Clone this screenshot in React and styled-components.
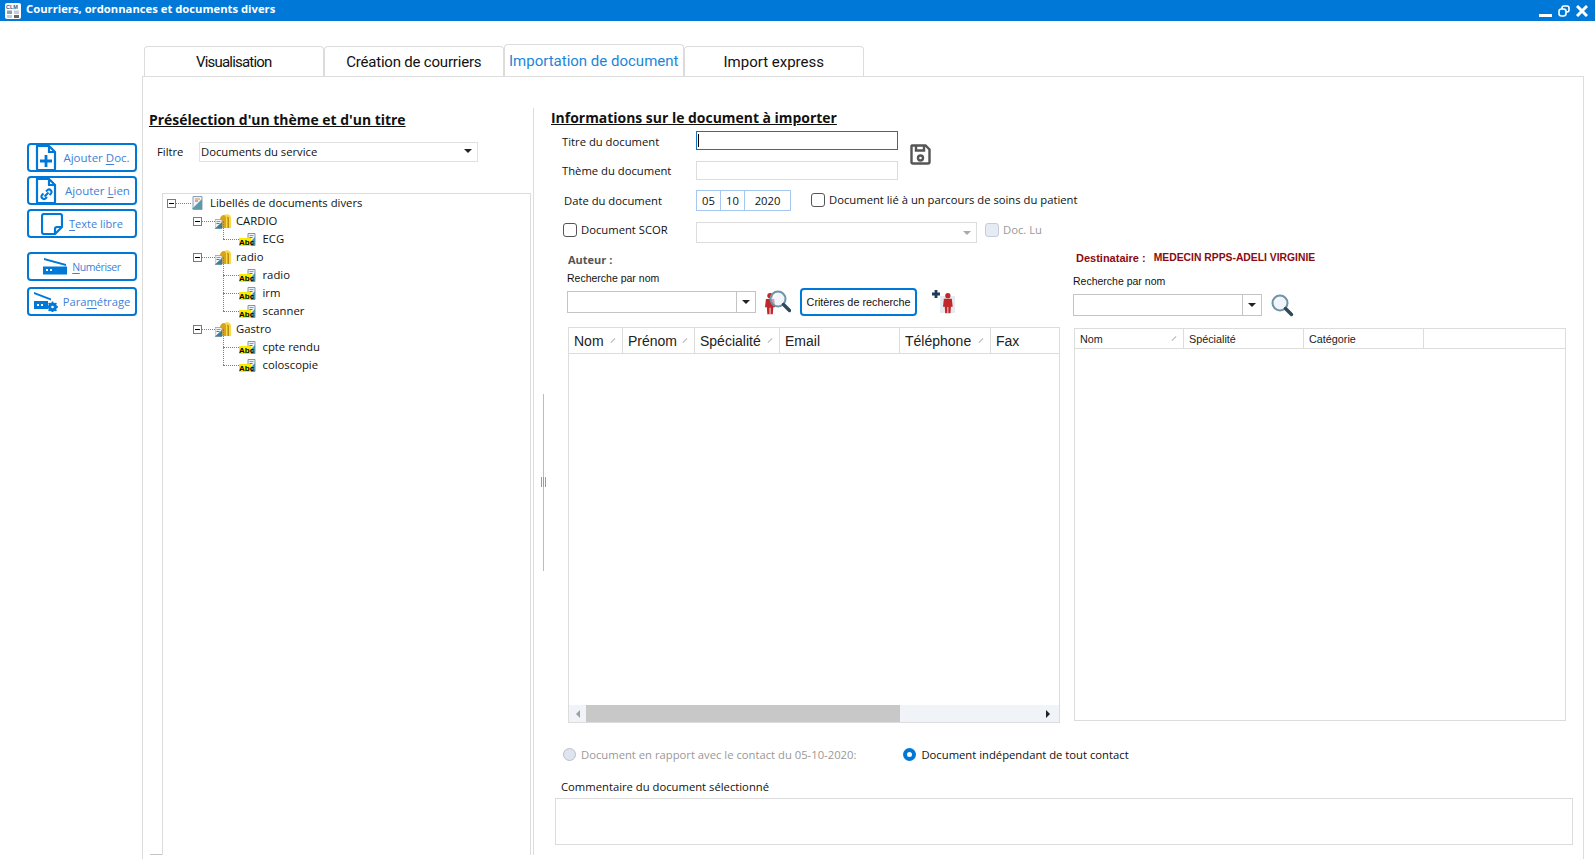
import React from 'react'
import styled, { createGlobalStyle } from 'styled-components'

const BLUE = '#0078d7'
const LINE = '#dcdcdc'

const Global = createGlobalStyle`
  html, body { margin: 0; padding: 0; background: #fff; }
  body { font-family: "Open Sans", "Liberation Sans", sans-serif; color: #111; overflow: hidden; }
`

const Screen = styled.div`
  width: 1595px;
  height: 859px;
  display: flex;
  flex-direction: column;
  overflow: hidden;
`

const TitleBar = styled.div`
  height: 21px;
  flex: none;
  background: ${BLUE};
  display: flex;
  align-items: center;
  padding: 0 5px;
  color: #fff;
`

const AppIcon = styled.svg`
  width: 16px;
  height: 16px;
  margin-right: 5px;
`

const WindowTitle = styled.span`
  font-size: 11.25px;
  font-weight: 700;
  flex: 1;
  padding-bottom: 4px;
`

const WindowButtons = styled.div`
  display: flex;
  align-items: center;
  gap: 6px;
  margin-right: 2px;
`

const Body = styled.div`
  flex: 1;
  display: flex;
  min-height: 0;
`

const Sidebar = styled.div`
  width: 142px;
  flex: none;
  box-sizing: border-box;
  padding: 122px 0 0 27px;
  display: flex;
  flex-direction: column;
`

const SideButton = styled.button`
  width: 110px;
  height: 29px;
  margin-bottom: ${(p) => p.$mb || 4}px;
  box-sizing: border-box;
  border: 2px solid ${BLUE};
  border-radius: 4px;
  background: #fff;
  display: flex;
  align-items: center;
  justify-content: center;
  gap: ${(p) => p.$gap || 6}px;
  padding: 0 0 0 ${(p) => p.$pl || 0}px;
  color: #3d7fd9;
  font-family: "Open Sans", sans-serif;
  font-size: ${(p) => p.$fs || 11.5}px;
  letter-spacing: ${(p) => p.$ls || 0}px;
  u { text-decoration-thickness: 1px; text-underline-offset: 2px; }
`

const Main = styled.div`
  flex: 1;
  display: flex;
  flex-direction: column;
  padding: 25px 11px 0 0;
  min-width: 0;
`

const Tabs = styled.div`
  display: flex;
  gap: 0.5px;
  padding-left: 2px;
  height: 30px;
  flex: none;
`

const Tab = styled.div`
  width: 179.5px;
  box-sizing: border-box;
  border: 1px solid ${LINE};
  border-bottom: none;
  border-radius: 4px 4px 0 0;
  margin-top: ${(p) => (p.$active ? -2 : 0)}px;
  display: flex;
  align-items: center;
  justify-content: center;
  font-family: Roboto, sans-serif;
  font-size: 15px;
  letter-spacing: ${(p) => p.$tight || 0}px;
  color: ${(p) => (p.$active ? '#1a86d9' : '#111')};
`

const Panel = styled.div`
  flex: 1;
  display: flex;
  min-height: 0;
  box-sizing: border-box;
  border: 1px solid ${LINE};
  border-bottom: none;
`

const LeftPane = styled.div`
  width: 390px;
  flex: none;
  position: relative;
  box-sizing: border-box;
  display: flex;
  flex-direction: column;
  padding: 34px 0 4px 19px;
`

const Heading = styled.h2`
  margin: 0 0 0 ${(p) => p.$ml}px;
  font-size: 13.95px;
  line-height: 18px;
  font-weight: 700;
  text-decoration: underline;
  color: #111;
  white-space: nowrap;
`

const FilterRow = styled.div`
  display: flex;
  align-items: center;
  margin: 13px 0 0 -13px;
  height: 20px;
`

const Label = styled.span`
  font-size: 11.25px;
  white-space: nowrap;
  color: ${(p) => (p.$muted ? '#999' : '#111')};
`

const FilterLabel = styled(Label)`
  width: 42px;
  margin-left: 8px;
  padding-bottom: 2px;
`

const Select = styled.div`
  width: 279px;
  height: 20px;
  box-sizing: border-box;
  border: 1px solid #e2e2e2;
  display: flex;
  align-items: center;
  justify-content: space-between;
  font-size: 11.25px;
  padding: 0 5px 2px 1px;
`

const Arrow = styled.i`
  width: 0;
  height: 0;
  border-left: 4px solid transparent;
  border-right: 4px solid transparent;
  border-top: 4px solid ${(p) => p.$c || '#222'};
`

const TreeBox = styled.div`
  flex: 1;
  margin: 31px 2px 0 0;
  border: 1px solid ${LINE};
  border-bottom: none;
  position: relative;
  &::after {
    content: '';
    position: absolute;
    left: -13px;
    bottom: 0;
    width: 12px;
    height: 1px;
    background: #c4c4c4;
  }
`

const Group = styled.div`
  position: relative;
  &::before {
    content: '';
    position: absolute;
    left: ${(p) => p.$x}px;
    top: ${(p) => p.$top}px;
    bottom: ${(p) => p.$bottom}px;
    border-left: 1px dotted #808080;
  }
`

const Row = styled.div`
  height: 18px;
  display: flex;
  align-items: center;
  padding-left: ${(p) => p.$indent}px;
  position: relative;
`

const Expander = styled.span`
  width: 9px;
  height: 9px;
  box-sizing: border-box;
  border: 1px solid #7a7a7a;
  background: #fff;
  position: relative;
  flex: none;
  z-index: 1;
  &::after {
    content: '';
    position: absolute;
    left: 1px;
    right: 1px;
    top: 3px;
    height: 1px;
    background: #000;
  }
`

const Dash = styled.span`
  width: ${(p) => p.$w}px;
  flex: none;
  border-top: 1px dotted #808080;
`

const TreeText = styled.span`
  margin-left: ${(p) => p.$ml}px;
  padding-bottom: 2px;
  font-size: 11.3px;
  white-space: nowrap;
`

const Splitter = styled.div`
  width: 21px;
  flex: none;
  margin: 31px 0 4px;
  box-sizing: border-box;
  border-left: 1px solid ${LINE};
  display: flex;
  flex-direction: column;
  align-items: flex-start;
`

const SplitLine = styled.div`
  width: 1px;
  height: 177px;
  margin: 286px 0 0 9px;
  background: #bdbdbd;
`

const Grip = styled.div`
  width: 5px;
  height: 10px;
  margin: -94px 0 0 7px;
  background: repeating-linear-gradient(90deg, #9a9a9a 0 1px, #fff 1px 2px);
`

const RightPane = styled.div`
  flex: 1;
  min-width: 0;
  display: flex;
  flex-direction: column;
  padding: 32px 0 0 0;
`

const FormGrid = styled.div`
  display: grid;
  grid-template-columns: 142px 202px 1fr;
  grid-auto-rows: min-content;
  margin-top: 4px;
`

const FormLabel = styled(Label)`
  padding-left: ${(p) => p.$pl || 8}px;
  align-self: start;
  line-height: ${(p) => p.$lh || 19}px;
`

const Field = styled.div`
  height: ${(p) => p.$h}px;
  box-sizing: border-box;
  border: 1px solid ${(p) => (p.$focus ? '#1573c4' : LINE)};
  display: flex;
  align-items: center;
  justify-content: flex-end;
  padding-right: 6px;
  margin-bottom: ${(p) => p.$mb}px;
`

const Caret = styled.i`
  width: 1px;
  height: 13px;
  background: #000;
  margin: 0 auto 0 1px;
`

const SaveSlot = styled.div`
  grid-row: span 2;
  padding: 13px 0 0 12px;
`

const DateRow = styled.div`
  display: flex;
  align-items: center;
  grid-column: 2 / 4;
  height: 21px;
  margin-bottom: 11px;
`

const DatePart = styled.div`
  width: ${(p) => p.$w}px;
  height: 21px;
  box-sizing: border-box;
  border: 1px solid #a5c8f0;
  border-left-width: ${(p) => (p.$first ? 1 : 0)}px;
  display: flex;
  align-items: center;
  justify-content: center;
  font-size: 11.25px;
`

const Check = styled.span`
  width: 14px;
  height: 14px;
  box-sizing: border-box;
  border: 1px solid ${(p) => (p.$off ? '#c3ccda' : '#555')};
  background: ${(p) => (p.$off ? '#e6ebf3' : '#fff')};
  border-radius: 3px;
  flex: none;
`

const CheckRow = styled.div`
  display: flex;
  align-items: center;
  gap: 4px;
  margin-left: ${(p) => p.$ml || 0}px;
  transform: translateY(${(p) => p.$up || 0}px);
`

const ScorRow = styled(CheckRow)`
  height: 21px;
  padding-left: 9px;
  box-sizing: border-box;
`

const ScorExtras = styled.div`
  grid-column: 2 / 4;
  display: flex;
  align-items: center;
`

const ScorSelect = styled(Field)`
  width: 281px;
  margin-bottom: 0;
  padding-right: 5px;
`

const Columns = styled.div`
  flex: 1;
  min-height: 0;
  display: flex;
  gap: 13px;
  margin-top: 8px;
`

const Column = styled.div`
  display: flex;
  flex-direction: column;
  width: 493px;
  margin-left: ${(p) => p.$ml}px;
`

const AuthorTitle = styled.div`
  font-size: 11px;
  font-weight: 700;
  color: #555;
  margin-left: 1px;
  height: 18px;
  line-height: 18px;
`

const DestTitle = styled.div`
  display: flex;
  gap: 8px;
  font-size: 11px;
  font-weight: 700;
  color: #8a0b12;
  margin: -2px 0 0 3px;
  height: 18px;
  line-height: 18px;
  white-space: pre;
  font-family: "Liberation Sans", sans-serif;
`

const DestName = styled.span`
  font-size: 10.35px;
`

const SearchLabel = styled.div`
  font-family: "Liberation Sans", sans-serif;
  font-size: 10.5px;
  line-height: 14px;
  margin-top: ${(p) => p.$mt}px;
`

const SearchRow = styled.div`
  display: flex;
  align-items: center;
  height: 28px;
  margin-top: ${(p) => p.$mt}px;
`

const Combo = styled.div`
  width: 189px;
  height: 22px;
  box-sizing: border-box;
  border: 1px solid #c4c4c4;
  display: flex;
  justify-content: flex-end;
  flex: none;
  margin-right: ${(p) => p.$mr}px;
`

const ComboButton = styled.div`
  width: 18px;
  border-left: 1px solid #c4c4c4;
  display: flex;
  align-items: center;
  justify-content: center;
`

const Criteria = styled.button`
  width: 117px;
  height: 28px;
  box-sizing: border-box;
  border: 2px solid ${BLUE};
  border-radius: 4px;
  background: #fff;
  font-family: "Liberation Sans", sans-serif;
  font-size: 10.8px;
  padding: 0;
  margin: 0 15px 0 9px;
  color: #111;
  white-space: nowrap;
`

const GridBox = styled.div`
  height: ${(p) => p.$h}px;
  margin: ${(p) => p.$mt}px 0 0 ${(p) => p.$ml}px;
  box-sizing: border-box;
  border: 1px solid ${LINE};
  display: flex;
  flex-direction: column;
`

const GridHead = styled.div`
  display: flex;
  flex: none;
  height: ${(p) => p.$h}px;
  box-sizing: border-box;
  border-bottom: 1px solid ${LINE};
`

const HeadCell = styled.div`
  width: ${(p) => p.$w}px;
  flex: ${(p) => (p.$w ? 'none' : 1)};
  box-sizing: border-box;
  border-right: ${(p) => (p.$last ? 'none' : `1px solid ${LINE}`)};
  display: flex;
  align-items: center;
  justify-content: space-between;
  padding: 0 6px 0 5px;
  font-family: "Liberation Sans", sans-serif;
  font-size: ${(p) => p.$fs}px;
  color: #222;
`

const SortTick = styled.i`
  width: 6px;
  height: 1px;
  background: #b5b5b5;
  transform: rotate(-45deg);
  flex: none;
`

const GridFill = styled.div`
  flex: 1;
`

const ScrollBar = styled.div`
  height: 17px;
  flex: none;
  background: #f0f3f8;
  display: flex;
  align-items: center;
`

const ScrollThumb = styled.div`
  width: 314px;
  height: 100%;
  background: #c8c8c8;
  margin-left: 18px;
`

const ScrollArrow = styled.i`
  width: 0;
  height: 0;
  border-top: 4px solid transparent;
  border-bottom: 4px solid transparent;
  border-${(p) => (p.$left ? 'right' : 'left')}: 4px solid ${(p) => (p.$left ? '#a0a0a0' : '#222')};
  margin: ${(p) => (p.$left ? '0 -12px 0 7px' : '0 0 0 146px')};
`

const RadioRow = styled.div`
  display: flex;
  align-items: center;
  height: 20px;
  margin: 20px 0 0 9px;
`

const Radio = styled.span`
  width: 13px;
  height: 13px;
  box-sizing: border-box;
  border-radius: 50%;
  flex: none;
  margin-right: 5px;
  background: ${(p) => (p.$on ? '#fff' : '#dfe4ee')};
  border: ${(p) => (p.$on ? `4px solid ${BLUE}` : '1px solid #b8c0cc')};
`

const RadioGap = styled.span`
  width: 47px;
`

const CommentLabel = styled(Label)`
  margin: 15px 0 0 7px;
  line-height: 16px;
`

const CommentBox = styled.div`
  height: 47px;
  flex: none;
  margin: 3px 10px 14px 1px;
  box-sizing: border-box;
  border: 1px solid ${LINE};
`

const DocGlyph = ({ children }) => (
  <svg width="22" height="26" viewBox="0 0 22 26" fill="none" stroke={BLUE} strokeWidth="2.200">
    <path d="M2 1h12l6 6v17a1 1 0 0 1-1 1H3a1 1 0 0 1-1-1z" />
    <path d="M14 1v6h6" />
    {children}
  </svg>
)

const PlusDocIcon = () => (
  <DocGlyph>
    <path d="M11 10v12M5 16h12" strokeWidth="2.800" />
  </DocGlyph>
)

const LinkDocIcon = () => (
  <DocGlyph>
    <path d="M9.500 18.500l4-4" strokeWidth="2" />
    <path d="M8.500 15.500l-1.500 1.500a2.500 2.500 0 0 0 3.500 3.500l1.500-1.500" strokeWidth="2" />
    <path d="M11 13.500l1.500-1.500a2.500 2.500 0 0 1 3.500 3.500l-1.500 1.500" strokeWidth="2" />
  </DocGlyph>
)

const NoteIcon = () => (
  <svg width="22" height="22" viewBox="0 0 22 22" fill="none" stroke={BLUE} strokeWidth="2.200">
    <path d="M14 21H3a2 2 0 0 1-2-2V3a2 2 0 0 1 2-2h16a2 2 0 0 1 2 2v11z" />
    <path d="M14 21v-5a2 2 0 0 1 2-2h5" />
  </svg>
)

const ScannerIcon = () => (
  <svg width="24" height="17" viewBox="0 0 24 17">
    <path d="M1 0l22 6v2L1 2z" fill={BLUE} />
    <rect y="8.500" width="24" height="8" fill={BLUE} />
    <rect x="3" y="11" width="2" height="2" fill="#fff" />
    <rect x="7" y="11" width="2" height="2" fill="#fff" />
  </svg>
)

const ScannerGearIcon = () => (
  <svg width="24" height="20" viewBox="0 0 24 20">
    <path d="M0 0l17 6.500v2L0 2z" fill={BLUE} />
    <rect y="9" width="14" height="8" fill={BLUE} />
    <rect x="3" y="12" width="2" height="2" fill="#fff" />
    <rect x="7" y="12" width="2" height="2" fill="#fff" />
    <circle cx="18.500" cy="15" r="3.400" fill="none" stroke={BLUE} strokeWidth="2.200" />
    <path d="M18.500 9.500v11M13 15h11M14.600 11.100l7.800 7.800M22.400 11.100l-7.800 7.800" stroke={BLUE} strokeWidth="1.600" />
    <circle cx="18.500" cy="15" r="1.300" fill="#fff" />
  </svg>
)

const RootIcon = () => (
  <svg width="13" height="14" viewBox="0 0 13 14">
    <path d="M2 .5h9v13H2z" fill="#eef3f8" stroke="#8aa0b8" />
    <path d="M1 13L11 3v10z" fill="#5c9aa8" />
    <path d="M4 3h5" stroke="#e8892c" />
    <path d="M4 5h3" stroke="#d04a3a" />
  </svg>
)

const FolderIcon = () => (
  <svg width="16" height="15" viewBox="0 0 16 15">
    <path d="M5 5c0-2 2-4 4-4h3v13H5z" fill="#d9a41a" />
    <path d="M9 1c3-1.500 7-1 7 3v10h-5V4c0-1.500-1-2.500-2-3z" fill="#f7da45" />
    <path d="M12 3c1-.5 2 .5 2 1.500V14h-1.500V4.500z" fill="#b88c10" />
    <path d="M0 5.500h7v9H0z" fill="#eef3f8" stroke="#8aa0b8" strokeWidth=".8" />
    <path d="M0 14.500L7 8v6.500z" fill="#3e7f96" />
    <path d="M1.500 7.500h4" stroke="#e8892c" />
    <path d="M1.500 9.500h3" stroke="#d04a3a" />
  </svg>
)

const AbcIcon = () => (
  <svg width="17" height="13" viewBox="0 0 17 13">
    <path d="M9 .5h7v12H9z" fill="#eef3f8" stroke="#7f96ac" />
    <path d="M8 12.500L16 4v8.500z" fill="#4f93a3" />
    <path d="M10.500 2.500h4" stroke="#e8892c" />
    <path d="M10.500 4.500h3" stroke="#d04a3a" />
    <rect y="5" width="12" height="8" fill="#ffe800" />
    <text x="0" y="12" fontFamily="Liberation Sans" fontSize="8" fontWeight="700" fill="#000">Abc</text>
  </svg>
)

const SaveIcon = () => (
  <svg width="21" height="21" viewBox="0 0 21 21" fill="none" stroke="#555" strokeWidth="2.400">
    <path d="M2 1.500h13.500l4 4V18a1.500 1.500 0 0 1-1.500 1.500H3A1.500 1.500 0 0 1 1.500 18V2z" />
    <path d="M6 1.500v5h8v-5" />
    <circle cx="10.500" cy="14" r="2.500" />
  </svg>
)

const Lens = () => (
  <>
    <circle cx="11" cy="10" r="7.500" fill="#e4eff7" fillOpacity=".6" stroke="#6f94a8" strokeWidth="2" />
    <path d="M16.500 15.500l6 6" stroke="#2d4a5c" strokeWidth="3.400" strokeLinecap="round" />
    <path d="M6.500 8a5 5 0 0 1 4-3" stroke="#fff" strokeWidth="1.200" fill="none" />
  </>
)

const PersonShape = ({ x = 0, y = 0, s = 1 }) => (
  <g transform={`translate(${x} ${y}) scale(${s})`} fill="#c0262a">
    <circle cx="5.500" cy="3" r="3" />
    <path d="M1 6.500h9l1 9H9L8.500 23H6V16H5v7H2.500L2 15.500H0z" />
  </g>
)

const PersonSearchIcon = () => (
  <svg width="26" height="26" viewBox="0 0 26 26">
    <PersonShape x={0} y={4} s={0.92} />
    <g transform="translate(2 0)">
      <Lens />
    </g>
  </svg>
)

const PersonAddIcon = () => (
  <svg width="24" height="24" viewBox="0 0 24 24">
    <rect x="8" y="6" width="15" height="17" fill="#e6ebef" />
    <path d="M4 0v8M0 4h8" stroke="#1c3c5a" strokeWidth="2.800" />
    <PersonShape x={11} y={3} s={0.88} />
  </svg>
)

const SearchIcon = () => (
  <svg width="25" height="26" viewBox="0 0 25 26">
    <g transform="translate(0 1)">
      <Lens />
    </g>
  </svg>
)

const Leaf = ({ children }) => (
  <Row $indent={60}>
    <Dash $w={16} />
    <AbcIcon />
    <TreeText $ml={6.500}>{children}</TreeText>
  </Row>
)

const Branch = ({ name, items }) => (
  <>
    <Row $indent={30}>
      <Expander />
      <Dash $w={13} />
      <FolderIcon />
      <TreeText $ml={5}>{name}</TreeText>
    </Row>
    <Group $x={60} $top={-9} $bottom={9}>
      {items.map((item) => (
        <Leaf key={item}>{item}</Leaf>
      ))}
    </Group>
  </>
)

const authorCols = [
  { name: 'Nom', w: 54, tick: true },
  { name: 'Prénom', w: 72, tick: true },
  { name: 'Spécialité', w: 85, tick: true },
  { name: 'Email', w: 120 },
  { name: 'Téléphone', w: 91, tick: true },
  { name: 'Fax', last: true },
]

const destCols = [
  { name: 'Nom', w: 109, tick: true },
  { name: 'Spécialité', w: 120 },
  { name: 'Catégorie', w: 120 },
  { name: '', last: true },
]

const GridHeader = ({ cols, h, fs }) => (
  <GridHead $h={h}>
    {cols.map((c) => (
      <HeadCell key={c.name} $w={c.w} $last={c.last} $fs={fs}>
        {c.name}
        {c.tick && <SortTick />}
      </HeadCell>
    ))}
  </GridHead>
)

export default function App() {
  return (
    <Screen>
      <Global />
      <TitleBar>
        <AppIcon viewBox="0 0 16 16">
          <rect width="16" height="16" rx="2" fill="#fff" />
          <text x="1" y="6" fontSize="5.500" fontWeight="700" fontFamily="Liberation Sans" fill="#2a5f8f">CLM</text>
          <rect x="2" y="7.500" width="5" height="3.500" fill="#8aa0b8" />
          <rect x="9" y="7.500" width="5" height="3.500" fill="#c5ced8" />
          <rect x="2" y="12" width="5" height="3" fill="#c5ced8" />
          <rect x="9" y="12" width="5" height="3" fill="#666" />
        </AppIcon>
        <WindowTitle>Courriers, ordonnances et documents divers</WindowTitle>
        <WindowButtons>
          <svg width="13" height="12" viewBox="0 0 13 12"><rect y="9" width="13" height="3" fill="#fff" /></svg>
          <svg width="12" height="12" viewBox="0 0 12 12" fill="none" stroke="#fff" strokeWidth="1.600">
            <rect x="4" y="1" width="7" height="6" rx="2" />
            <rect x="1" y="4" width="7" height="7" rx="2.500" fill={BLUE} />
          </svg>
          <svg width="12" height="12" viewBox="0 0 12 12" stroke="#fff" strokeWidth="3"><path d="M1 1l10 10M11 1L1 11" /></svg>
        </WindowButtons>
      </TitleBar>
      <Body>
        <Sidebar>
          <SideButton $pl={1}>
            <PlusDocIcon />
            <span>Ajouter <u>D</u>oc.</span>
          </SideButton>
          <SideButton $gap={8} $pl={1}>
            <LinkDocIcon />
            <span>Ajouter <u>L</u>ien</span>
          </SideButton>
          <SideButton $mb={14} $gap={6} $fs={11}>
            <NoteIcon />
            <span><u>T</u>exte libre</span>
          </SideButton>
          <SideButton $mb={6} $gap={5} $fs={10.500} $ls={-0.4}>
            <ScannerIcon />
            <span><u>N</u>umériser</span>
          </SideButton>
          <SideButton $gap={5} $fs={11.200}>
            <ScannerGearIcon />
            <span>Para<u>m</u>étrage</span>
          </SideButton>
        </Sidebar>
        <Main>
          <Tabs>
            <Tab $tight={-0.8}>Visualisation</Tab>
            <Tab $tight={-0.2}>Création de courriers</Tab>
            <Tab $active>Importation de document</Tab>
            <Tab>Import express</Tab>
          </Tabs>
          <Panel>
            <LeftPane>
              <Heading $ml={-13}>Présélection d'un thème et d'un titre</Heading>
              <FilterRow>
                <FilterLabel>Filtre</FilterLabel>
                <Select>
                  Documents du service
                  <Arrow />
                </Select>
              </FilterRow>
              <TreeBox>
                <Group $x={35} $top={18} $bottom={535}>
                  <Row $indent={4}>
                    <Expander />
                    <Dash $w={15} />
                    <RootIcon />
                    <TreeText $ml={6}>Libellés de documents divers</TreeText>
                  </Row>
                  <Branch name="CARDIO" items={['ECG']} />
                  <Branch name="radio" items={['radio', 'irm', 'scanner']} />
                  <Branch name="Gastro" items={['cpte rendu', 'coloscopie']} />
                </Group>
              </TreeBox>
            </LeftPane>
            <Splitter>
              <SplitLine />
              <Grip />
            </Splitter>
            <RightPane>
              <Heading $ml={-3}>Informations sur le document à importer</Heading>
              <FormGrid>
                <FormLabel $lh={21}>Titre du document</FormLabel>
                <Field $h={19} $mb={11} $focus><Caret /></Field>
                <SaveSlot><SaveIcon /></SaveSlot>
                <FormLabel>Thème du document</FormLabel>
                <Field $h={19} $mb={10} />
                <FormLabel $pl={10} $lh={21}>Date du document</FormLabel>
                <DateRow>
                  <DatePart $first $w={25}>05</DatePart>
                  <DatePart $w={24}>10</DatePart>
                  <DatePart $w={46}>2020</DatePart>
                  <CheckRow $ml={20} $up={-1}>
                    <Check />
                    <Label>Document lié à un parcours de soins du patient</Label>
                  </CheckRow>
                </DateRow>
                <ScorRow $up={-3}>
                  <Check />
                  <Label>Document SCOR</Label>
                </ScorRow>
                <ScorExtras>
                  <ScorSelect $h={21}><Arrow $c="#aaa" /></ScorSelect>
                  <CheckRow $ml={8} $up={-3}>
                    <Check $off />
                    <Label $muted>Doc. Lu</Label>
                  </CheckRow>
                </ScorExtras>
              </FormGrid>
              <Columns>
                <Column $ml={13}>
                  <AuthorTitle>Auteur :</AuthorTitle>
                  <SearchLabel $mt={2}>Recherche par nom</SearchLabel>
                  <SearchRow $mt={3}>
                    <Combo $mr={9}><ComboButton><Arrow /></ComboButton></Combo>
                    <PersonSearchIcon />
                    <Criteria>Critères de recherche</Criteria>
                    <PersonAddIcon />
                  </SearchRow>
                  <GridBox $h={396} $mt={11} $ml={1}>
                    <GridHeader cols={authorCols} h={26} fs={14} />
                    <GridFill />
                    <ScrollBar>
                      <ScrollArrow $left />
                      <ScrollThumb />
                      <ScrollArrow />
                    </ScrollBar>
                  </GridBox>
                </Column>
                <Column $ml={0}>
                  <DestTitle>
                    Destinataire :
                    <DestName>MEDECIN RPPS-ADELI VIRGINIE</DestName>
                  </DestTitle>
                  <SearchLabel $mt={7}>Recherche par nom</SearchLabel>
                  <SearchRow $mt={3}>
                    <Combo $mr={7}><ComboButton><Arrow /></ComboButton></Combo>
                    <SearchIcon />
                  </SearchRow>
                  <GridBox $h={393} $mt={9} $ml={1}>
                    <GridHeader cols={destCols} h={20} fs={10.800} />
                    <GridFill />
                  </GridBox>
                </Column>
              </Columns>
              <RadioRow>
                <Radio />
                <Label $muted>Document en rapport avec le contact du 05-10-2020:</Label>
                <RadioGap />
                <Radio $on />
                <Label>Document indépendant de tout contact</Label>
              </RadioRow>
              <CommentLabel>Commentaire du document sélectionné</CommentLabel>
              <CommentBox />
            </RightPane>
          </Panel>
        </Main>
      </Body>
    </Screen>
  )
}
